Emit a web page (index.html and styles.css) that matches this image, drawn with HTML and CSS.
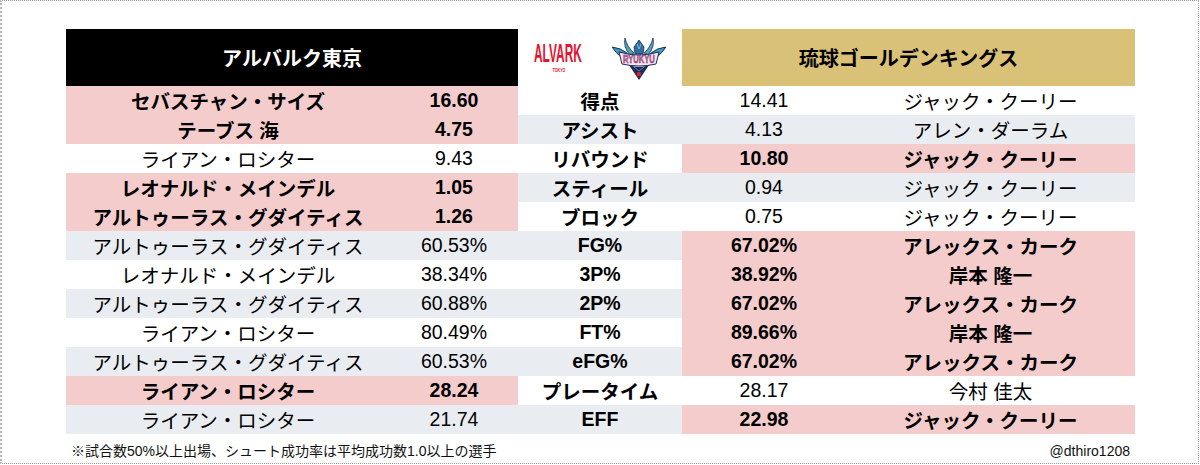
FILE: index.html
```html
<!DOCTYPE html>
<html lang="ja">
<head>
<meta charset="utf-8">
<title>アルバルク東京 vs 琉球ゴールデンキングス</title>
<link rel="stylesheet" href="styles.css">
</head>
<body>
<div class="frame">
  <div class="board">
    <div class="head head-left">アルバルク東京</div>
    <div class="head head-logos">
      <svg class="logo-alvark" viewBox="0 -5 48 37" width="48" height="37" aria-label="ALVARK TOKYO">
        <text transform="scale(0.45,1)" x="0" y="19.5" font-family="Liberation Sans, sans-serif" font-weight="bold" font-size="26.5" fill="#e5132f">ALVARK</text>
        <text transform="scale(0.61,1)" x="41" y="30.5" text-anchor="middle" font-family="Liberation Sans, sans-serif" font-weight="bold" font-size="6" fill="#e5132f">TOKYO</text>
      </svg>
      <svg class="logo-ryukyu" viewBox="0 0 54 44" width="54" height="44" aria-label="RYUKYU">
        <path d="M0 10 Q9 11 15 16 L19 25 Q8 22 0 10Z" fill="#3f9fb8" stroke="#1f2a5c" stroke-width="1"/>
        <path d="M54 10 Q45 11 39 16 L35 25 Q46 22 54 10Z" fill="#3f9fb8" stroke="#1f2a5c" stroke-width="1"/>
        <path d="M13 1 Q15 10 22 16 L18 18 Q11 10 13 1Z" fill="#4aa7b9" stroke="#1f2a5c" stroke-width="0.8"/>
        <path d="M41 1 Q39 10 32 16 L36 18 Q43 10 41 1Z" fill="#4aa7b9" stroke="#1f2a5c" stroke-width="0.8"/>
        <path d="M22 10 L27 3 L32 10 L31 17 L23 17Z" fill="#2f6f9a" stroke="#1f2a5c" stroke-width="0.8"/>
        <path d="M25 7 L27 12 L29 7" fill="none" stroke="#7fd0d8" stroke-width="0.8"/>
        <path d="M7 15 Q27 21 47 15 L44 27 Q27 31 10 27Z" fill="#fbe6ee" stroke="#1f2a5c" stroke-width="1"/>
        <text transform="scale(0.76,1)" x="35.5" y="26" text-anchor="middle" font-family="Liberation Sans, sans-serif" font-weight="bold" font-size="10" fill="#e56a9a" stroke="#2b2a66" stroke-width="0.4">RYUKYU</text>
        <path d="M17 28 Q27 32 37 28 L27 43Z" fill="#1f2a5c"/>
        <path d="M22 30 L27 34 L32 30" fill="none" stroke="#4aa7b9" stroke-width="0.8"/>
        <circle cx="27" cy="37" r="2.3" fill="#d8202a"/>
      </svg>
    </div>
    <div class="head head-right">琉球ゴールデンキングス</div>

    <div class="c win">セバスチャン・サイズ</div><div class="c win">16.60</div><div class="c lbl">得点</div><div class="c">14.41</div><div class="c">ジャック・クーリー</div>

    <div class="c win">テーブス 海</div><div class="c win">4.75</div><div class="c lbl alt">アシスト</div><div class="c alt">4.13</div><div class="c alt">アレン・ダーラム</div>

    <div class="c">ライアン・ロシター</div><div class="c">9.43</div><div class="c lbl">リバウンド</div><div class="c win">10.80</div><div class="c win">ジャック・クーリー</div>

    <div class="c win">レオナルド・メインデル</div><div class="c win">1.05</div><div class="c lbl alt">スティール</div><div class="c alt">0.94</div><div class="c alt">ジャック・クーリー</div>

    <div class="c win">アルトゥーラス・グダイティス</div><div class="c win">1.26</div><div class="c lbl">ブロック</div><div class="c">0.75</div><div class="c">ジャック・クーリー</div>

    <div class="c alt">アルトゥーラス・グダイティス</div><div class="c alt">60.53%</div><div class="c lbl alt">FG%</div><div class="c win">67.02%</div><div class="c win">アレックス・カーク</div>

    <div class="c">レオナルド・メインデル</div><div class="c">38.34%</div><div class="c lbl">3P%</div><div class="c win">38.92%</div><div class="c win">岸本 隆一</div>

    <div class="c alt">アルトゥーラス・グダイティス</div><div class="c alt">60.88%</div><div class="c lbl alt">2P%</div><div class="c win">67.02%</div><div class="c win">アレックス・カーク</div>

    <div class="c">ライアン・ロシター</div><div class="c">80.49%</div><div class="c lbl">FT%</div><div class="c win">89.66%</div><div class="c win">岸本 隆一</div>

    <div class="c alt">アルトゥーラス・グダイティス</div><div class="c alt">60.53%</div><div class="c lbl alt">eFG%</div><div class="c win">67.02%</div><div class="c win">アレックス・カーク</div>

    <div class="c win">ライアン・ロシター</div><div class="c win">28.24</div><div class="c lbl">プレータイム</div><div class="c">28.17</div><div class="c">今村 佳太</div>

    <div class="c alt">ライアン・ロシター</div><div class="c alt">21.74</div><div class="c lbl alt">EFF</div><div class="c win">22.98</div><div class="c win">ジャック・クーリー</div>
  </div>
  <div class="foot">
    <span>※試合数50%以上出場、シュート成功率は平均成功数1.0以上の選手</span>
    <span>@dthiro1208</span>
  </div>
</div>
</body>
</html>
```

FILE: styles.css
```css
html, body {
  margin: 0;
  padding: 0;
  background: #ffffff;
}

body {
  font-family: "Liberation Sans", "Noto Sans CJK JP", sans-serif;
  color: #000;
}

.frame {
  box-sizing: border-box;
  width: 1199px;
  height: 464px;
  border: 1px dotted #9a9a9a;
  border-left: 2px dotted #b5b5b5;
  padding: 28px 0 0 64px;
  background: #fff;
}

.board {
  width: 1069px;
  display: grid;
  grid-template-columns: 324px 128px 164px 164px 289px;
  grid-template-rows: 57px repeat(12, 29px);
}

.head {
  display: flex;
  align-items: center;
  justify-content: center;
  font-size: 20px;
  font-weight: bold;
}

.head-left {
  grid-column: 1 / 3;
  background: #000;
  color: #fff;
}

.head-logos {
  grid-column: 3;
  background: #fff;
  gap: 30px;
}

.head-right {
  grid-column: 4 / 6;
  background: #d9c177;
  color: #000;
}

.logo-alvark, .logo-ryukyu {
  display: block;
}

.logo-alvark {
  margin-bottom: 4px;
}

.logo-ryukyu {
  margin-top: 2px;
}

.c {
  display: flex;
  align-items: center;
  justify-content: center;
  font-size: 19.5px;
  white-space: nowrap;
  background: #fff;
}

.alt {
  background: #e9edf1;
}

.win {
  background: #f4cccc;
  font-weight: bold;
}

.lbl {
  font-weight: bold;
}

.foot {
  width: 1059px;
  margin-top: 9px;
  padding: 0 5px;
  display: flex;
  justify-content: space-between;
  font-size: 14px;
  line-height: 16px;
  color: #111;
}
```
